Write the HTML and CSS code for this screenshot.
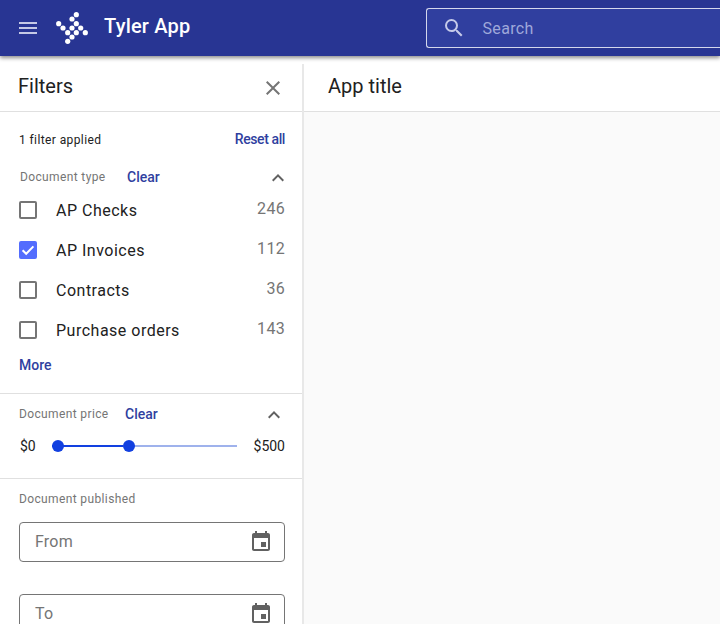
FILE: index.html
```html
<!DOCTYPE html>
<html>
<head>
<meta charset="utf-8">
<title>Tyler App</title>
<link rel="stylesheet" href="styles.css">
</head>
<body>
	<header class="appbar">
		<svg class="menu-icon" width="24" height="24" viewBox="0 0 24 24"><path d="M3 18h18v-2H3v2zm0-5h18v-2H3v2zm0-7v2h18V6H3z"/></svg>
		<svg class="logo" width="36" height="36" viewBox="0 0 36 36">
			<circle cx="22.3" cy="4.7" r="2.6"/>
			<circle cx="18" cy="9" r="2.6"/>
			<circle cx="4.7" cy="13.7" r="2.6"/>
			<circle cx="22.3" cy="13.7" r="2.6"/>
			<circle cx="9" cy="18" r="2.6"/>
			<circle cx="18" cy="18" r="2.6"/>
			<circle cx="26.7" cy="18" r="2.6"/>
			<circle cx="13.7" cy="22.7" r="2.6"/>
			<circle cx="22.3" cy="22.7" r="2.6"/>
			<circle cx="31.3" cy="22.7" r="2.6"/>
			<circle cx="18" cy="27" r="2.6"/>
			<circle cx="13.7" cy="31.3" r="2.6"/>
		</svg>
		<span class="app-name">Tyler App</span>
		<div class="search">
			<svg width="24" height="24" viewBox="0 0 24 24"><path d="M15.5 14h-.79l-.28-.27A6.47 6.47 0 0 0 16 9.5 6.5 6.5 0 1 0 9.5 16c1.61 0 3.09-.59 4.23-1.57l.27.28v.79l5 4.99L20.49 19l-4.99-5zm-6 0C7.01 14 5 11.99 5 9.5S7.01 5 9.5 5 14 7.01 14 9.5 11.99 14 9.5 14z"/></svg>
			<span>Search</span>
		</div>
	</header>

	<div class="layout">
		<aside class="filters">
			<div class="filters-head">
				<h2>Filters</h2>
				<svg class="close" width="24" height="24" viewBox="0 0 24 24"><path d="M19 6.41 17.59 5 12 10.59 6.41 5 5 6.41 10.59 12 5 17.59 6.41 19 12 13.41 17.59 19 19 17.59 13.41 12z"/></svg>
			</div>

			<section class="group group-type">
				<div class="applied">
					<span>1 filter applied</span>
					<a class="link reset" href="#">Reset all</a>
				</div>
				<div class="group-title">
					<span class="label">Document type</span>
					<a class="link" href="#">Clear</a>
					<svg class="chevron" width="24" height="24" viewBox="0 0 24 24"><path d="M12 8l-6 6 1.41 1.41L12 10.83l4.59 4.58L18 14z"/></svg>
				</div>
				<ul class="options">
					<li><span class="box"></span><span class="name">AP Checks</span><span class="count">246</span></li>
					<li>
						<span class="box checked"><svg width="14" height="14" viewBox="0 0 14 14"><path d="M1.6 7.2l3.6 3.6 7.2-7.4" fill="none" stroke="#fff" stroke-width="2"/></svg></span>
						<span class="name">AP Invoices</span><span class="count">112</span>
					</li>
					<li><span class="box"></span><span class="name">Contracts</span><span class="count">36</span></li>
					<li><span class="box"></span><span class="name">Purchase orders</span><span class="count">143</span></li>
				</ul>
				<a class="link more" href="#">More</a>
			</section>

			<section class="group group-price">
				<div class="group-title">
					<span class="label">Document price</span>
					<a class="link" href="#">Clear</a>
					<svg class="chevron" width="24" height="24" viewBox="0 0 24 24"><path d="M12 8l-6 6 1.41 1.41L12 10.83l4.59 4.58L18 14z"/></svg>
				</div>
				<div class="price">
					<span>$0</span>
					<div class="slider">
						<div class="fill"></div>
						<span class="thumb thumb-a"></span>
						<span class="thumb thumb-b"></span>
					</div>
					<span>$500</span>
				</div>
			</section>

			<section class="group-published">
				<div class="label">Document published</div>
				<div class="date-field">
					<span>From</span>
					<svg width="24" height="24" viewBox="0 0 24 24"><path d="M17 12h-5v5h5v-5zM16 1v2H8V1H6v2H5c-1.11 0-1.99.9-1.99 2L3 19c0 1.1.89 2 2 2h14c1.1 0 2-.9 2-2V5c0-1.1-.9-2-2-2h-1V1h-2zm3 18H5V8h14v11z"/></svg>
				</div>
				<div class="date-field">
					<span>To</span>
					<svg width="24" height="24" viewBox="0 0 24 24"><path d="M17 12h-5v5h5v-5zM16 1v2H8V1H6v2H5c-1.11 0-1.99.9-1.99 2L3 19c0 1.1.89 2 2 2h14c1.1 0 2-.9 2-2V5c0-1.1-.9-2-2-2h-1V1h-2zm3 18H5V8h14v11z"/></svg>
				</div>
			</section>
		</aside>

		<main class="content">
			<div class="content-head">App title</div>
		</main>
	</div>
</body>
</html>
```

FILE: styles.css
```css
* {
	margin: 0;
	padding: 0;
	box-sizing: border-box;
}
html, body {
	height: 624px;
	overflow: hidden;
}
body {
	font-family: Roboto, "Liberation Sans", sans-serif;
	background-color: #fff;
	color: #212121;
}
a {
	text-decoration: none;
}

/* top bar */
.appbar {
	position: relative;
	z-index: 2;
	height: 56px;
	display: flex;
	align-items: center;
	background-color: #283593;
	box-shadow: 0 2px 4px rgba(0, 0, 0, 0.45);
}
.menu-icon {
	margin-left: 16px;
	fill: #c5c9e6;
}
.logo {
	margin-left: 14px;
	fill: #fff;
}
.app-name {
	margin-left: 14px;
	padding-bottom: 4px;
	font-size: 20px;
	font-weight: 500;
	letter-spacing: 0.2px;
	color: #fff;
}
.search {
	margin-left: 236px;
	flex: 1;
	height: 40px;
	display: flex;
	align-items: center;
	padding-left: 15px;
	background-color: #303f9f;
	border: 1px solid #d4d7ec;
	border-right: 0;
	border-radius: 3px 0 0 3px;
	font-size: 16px;
	letter-spacing: 0.35px;
	color: #9fa8da;
}
.search svg {
	fill: #c5cae9;
	margin-right: 16px;
}

.layout {
	height: 568px;
	padding-top: 8px;
	display: flex;
}

/* filter panel */
.filters {
	width: 304px;
	flex-shrink: 0;
	border-right: 2px solid #e8e8e8;
}
.filters-head {
	height: 48px;
	display: flex;
	align-items: center;
	justify-content: space-between;
	padding: 0 18px;
	border-bottom: 1px solid #e0e0e0;
}
.filters-head h2 {
	padding-bottom: 4px;
	font-size: 20px;
	font-weight: 400;
}
.close {
	fill: #757575;
	margin-right: -1px;
}
.link {
	font-size: 14px;
	font-weight: 500;
	padding-bottom: 2px;
	color: #303f9f;
}
.reset {
	letter-spacing: -0.4px;
}
.label {
	padding-bottom: 2px;
	font-size: 12px;
	letter-spacing: 0.37px;
	color: #757575;
}
.group {
	border-bottom: 1px solid #e0e0e0;
}
.group-type {
	height: 282px;
	padding: 20px 17px 0 19px;
}
.applied {
	height: 18px;
	display: flex;
	align-items: center;
	justify-content: space-between;
	padding-bottom: 2px;
	font-size: 12px;
	letter-spacing: 0.4px;
}
.group-title {
	display: flex;
	align-items: center;
	height: 24px;
}
.group-type .group-title {
	margin-top: 16px;
	padding-left: 1px;
}
.group-title .link {
	margin-left: 21.5px;
}
.chevron {
	fill: #616161;
	margin-left: auto;
	margin-right: -5px;
}
.options {
	list-style: none;
}
.options li {
	height: 40px;
	display: flex;
	align-items: center;
	font-size: 16px;
	letter-spacing: 0.5px;
}
.box {
	width: 18px;
	height: 18px;
	flex-shrink: 0;
	display: flex;
	align-items: center;
	justify-content: center;
	border: 2px solid #757575;
	border-radius: 2px;
	margin-right: 19px;
}
.box.checked {
	background-color: #536dfe;
	border-color: #536dfe;
}
.name {
	flex: 1;
	padding-top: 1px;
}
.count {
	margin-top: -3px;
	letter-spacing: 0.3px;
	color: #757575;
}
.more {
	display: block;
	margin-top: 7px;
}

.group-price {
	height: 85px;
	padding: 9px 17px 0 19px;
}
.group-price .group-title .link {
	margin-left: 16.5px;
}
.group-price .chevron {
	margin-right: -1px;
	margin-left: auto;
}
.price {
	display: flex;
	align-items: center;
	margin-top: 11px;
	font-size: 14px;
}
.price span:first-child {
	width: 33px;
	padding-left: 1px;
}
.slider {
	position: relative;
	width: 185px;
	height: 2px;
	margin-right: 17px;
	background-color: #9fb2ec;
}
.fill {
	width: 71px;
	height: 2px;
	background-color: #1240e0;
}
.thumb {
	position: absolute;
	top: -5px;
	width: 12px;
	height: 12px;
	border-radius: 50%;
	background-color: #1240e0;
}
.thumb-a {
	left: 0;
}
.thumb-b {
	left: 71px;
}

.group-published {
	padding: 13px 17px 0 19px;
}
.date-field {
	height: 40px;
	margin-top: 14px;
	display: flex;
	align-items: center;
	justify-content: space-between;
	padding: 0 11px 0 15px;
	border: 1px solid #757575;
	border-radius: 4px;
	font-size: 16px;
	letter-spacing: 0.2px;
	color: #757575;
}
.date-field + .date-field {
	margin-top: 32px;
}
.date-field span {
	padding-bottom: 2px;
}
.date-field svg {
	fill: #616161;
}

/* main area */
.content {
	flex: 1;
	background-color: #fafafa;
}
.content-head {
	height: 48px;
	padding: 0 0 4px 24px;
	display: flex;
	align-items: center;
	background-color: #fff;
	border-bottom: 1px solid #e0e0e0;
	font-size: 20px;
}
```
